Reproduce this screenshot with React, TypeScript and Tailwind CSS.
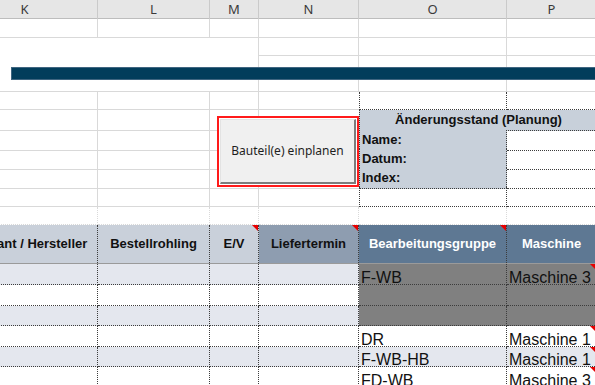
import React from 'react'

const COLS = 'grid grid-cols-[146px_112px_49px_100px_148px_90px]'
const GL = 'border-r border-b border-[#d9d9d9]'
const DOT = 'border-dotted border-[#3c3c3c]'

function Marker() {
  return (
    <span className="absolute right-0 top-0 h-0 w-0 border-l-[6px] border-t-[6px] border-l-transparent border-t-[#e60000]" />
  )
}

function PlainRow({ h }: { h: string }) {
  return (
    <div className={`${COLS} ${h}`}>
      {[0, 1, 2, 3, 4, 5].map((i) => (
        <div key={i} className={GL} />
      ))}
    </div>
  )
}

type DataRow = {
  h: string
  light: boolean
  gray?: boolean
  o?: string
  p?: string
  mark?: boolean
}

const dataRows: DataRow[] = [
  { h: 'h-[21px]', light: true, gray: true, o: 'F-WB', p: 'Maschine 3', mark: true },
  { h: 'h-[21px]', light: false, gray: true },
  { h: 'h-[20px]', light: true, gray: true },
  { h: 'h-[21px]', light: false, o: 'DR', p: 'Maschine 1', mark: true },
  { h: 'h-[20px]', light: true, o: 'F-WB-HB', p: 'Maschine 1', mark: true },
  { h: 'h-[21px]', light: false, o: 'FD-WB', p: 'Maschine 3', mark: true },
]

// Änderungsstand rows: label in column O, value in column P
const changeRows = ['Name:', 'Datum:', 'Index:']

export default function App() {
  const arial = { fontFamily: '"Liberation Sans", Arial, sans-serif' }

  return (
    <div className="relative h-[385px] w-[595px] overflow-hidden bg-white" style={arial}>
      <div className="-ml-[48px] w-[645px]">
        {/* column letters */}
        <div className={`${COLS} h-[19px] border-b border-[#bdbdbd] bg-[#e6e6e6] font-['Noto_Sans',sans-serif] text-[13px] text-[#3a3a3a]`}>
          {['K', 'L', 'M', 'N', 'O', 'P'].map((l) => (
            <div key={l} className="flex items-center justify-center border-r border-[#cacaca]">
              {l}
            </div>
          ))}
        </div>

        <PlainRow h="h-[19px]" />

        {/* block with title bar */}
        <div className={`${COLS} grid-rows-[18px_11px_13px_12px]`}>
          <div className="col-start-1 col-end-4 row-start-1 row-end-5 border-r border-b border-[#d9d9d9]" />
          <div className={`col-start-4 row-start-1 ${GL}`} />
          <div className={`col-start-5 row-start-1 ${GL}`} />
          <div className={`col-start-6 row-start-1 ${GL}`} />
          <div className={`col-start-4 row-start-2 row-end-5 ${GL}`} />
          <div className={`col-start-5 row-start-2 row-end-5 ${GL}`} />
          <div className={`col-start-6 row-start-2 row-end-5 ${GL}`} />
          <div className="col-start-1 col-end-7 row-start-3 ml-[59px] border border-[#3f6580] bg-[#023d5b]" />
        </div>

        <div className={`${COLS} h-[18px]`}>
          <div className={GL} />
          <div className={GL} />
          <div className={GL} />
          <div className="border-b border-[#d9d9d9]" />
          <div className={`border-b border-l border-r ${DOT}`} />
          <div className={`border-b ${DOT}`} />
        </div>

        {/* Änderungsstand header */}
        <div className={`${COLS} h-[20px]`}>
          <div className={GL} />
          <div className={GL} />
          <div className={GL} />
          <div className="border-b border-[#d9d9d9]" />
          <div className={`col-span-2 flex items-center justify-center border-b border-l ${DOT} bg-[#c8d0da] text-[13px] font-bold text-[#111]`}>
            Änderungsstand (Planung)
          </div>
        </div>

        {changeRows.map((label) => (
          <div key={label} className={`${COLS} h-[19px]`}>
            <div className={GL} />
            <div className={GL} />
            <div className={GL} />
            <div className="border-b border-[#d9d9d9]" />
            <div className={`flex items-center border-b border-l border-r ${DOT} bg-[#c8d0da] pl-[2px] text-[13px] font-bold text-[#111]`}>
              {label}
            </div>
            <div className={`border-b ${DOT}`} />
          </div>
        ))}

        <div className={`${COLS} h-[20px]`}>
          <div className={GL} />
          <div className={GL} />
          <div className={GL} />
          <div className="border-b border-[#d9d9d9]" />
          <div className={`border-b border-l border-r ${DOT}`} />
          <div className={`border-b ${DOT}`} />
        </div>

        <div className={`${COLS} h-[18px]`}>
          {[0, 1, 2, 3, 4, 5].map((i) => (
            <div key={i} className={`border-r border-[#d9d9d9] border-b ${DOT}`} />
          ))}
        </div>

        {/* table header */}
        <div className={`${COLS} h-[39px] border-b border-[#9a9a9a] text-[13px] font-bold`}>
          <div className={`flex items-center justify-center border-r ${DOT} bg-[#c9d0da] text-[#111]`}>
            Lieferant / Hersteller
          </div>
          <div className={`flex items-center justify-center border-r ${DOT} bg-[#c9d0da] text-[#111]`}>
            Bestellrohling
          </div>
          <div className={`relative flex items-center justify-center border-r ${DOT} bg-[#c9d0da] text-[#111]`}>
            E/V
            <Marker />
          </div>
          <div className={`relative flex items-center justify-center border-r ${DOT} bg-[#8e9db0] text-[#111]`}>
            Liefertermin
            <Marker />
          </div>
          <div className={`relative flex items-center justify-center border-r ${DOT} bg-[#5e7893] text-white`}>
            Bearbeitungsgruppe
            <Marker />
          </div>
          <div className={`flex items-center justify-center border-r ${DOT} bg-[#5e7893] text-white`}>
            Maschine
          </div>
        </div>

        {dataRows.map((r, i) => {
          const left = r.light ? 'bg-[#e4e7ee]' : 'bg-white'
          const right = r.gray ? 'bg-[#808080]' : left
          return (
            <div key={i} className={`${COLS} ${r.h} text-[16px] leading-[13px] text-[#111]`}>
              <div className={`border-r border-b ${DOT} ${left}`} />
              <div className={`border-r border-b ${DOT} ${left}`} />
              <div className={`border-r border-b ${DOT} ${left}`} />
              <div className={`border-r border-b ${DOT} ${left}`} />
              <div className={`flex items-end border-r border-b ${DOT} ${right} pl-[2px]`}>{r.o}</div>
              <div className={`relative flex items-end border-r border-b ${DOT} ${right} pl-[2px]`}>
                {r.p}
                {r.mark && <Marker />}
              </div>
            </div>
          )
        })}
      </div>

      {/* form button */}
      <div className="absolute left-[217px] top-[116px] h-[71px] w-[142px] border-2 border-[#ff1a1a] bg-white p-px">
        <div className="flex h-full w-full items-center justify-center border-t border-l border-r-2 border-b-2 border-t-[#e3e3e3] border-l-[#e3e3e3] border-r-[#7c7c7c] border-b-[#7c7c7c] bg-[#f0f0f0] font-['Noto_Sans',sans-serif] text-[12px] text-[#1e1e1e]">
          Bauteil(e) einplanen
        </div>
      </div>
    </div>
  )
}
